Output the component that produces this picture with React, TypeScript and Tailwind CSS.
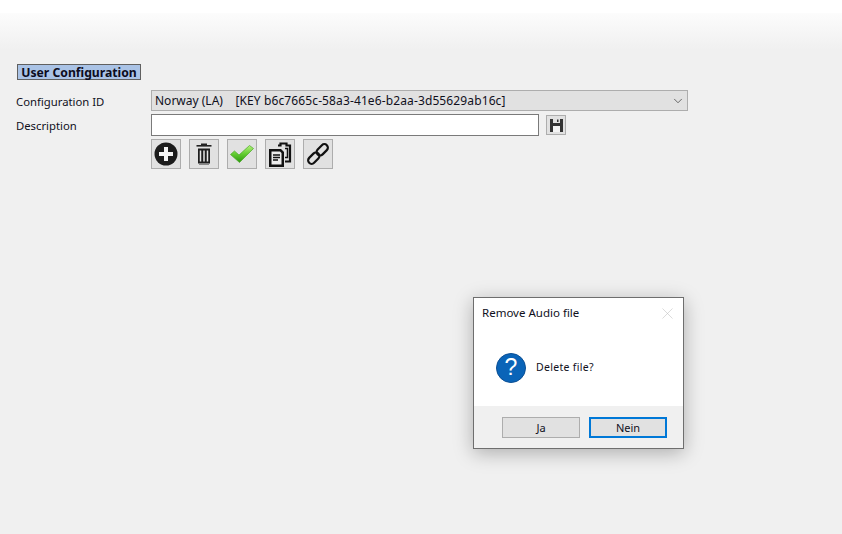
import { ChevronDown, X } from 'lucide-react';
import type { ReactNode } from 'react';

const font = { fontFamily: '"Noto Sans", sans-serif' };

function ToolButton({ children }: { children: ReactNode }) {
  return (
    <button className="w-[30px] h-[30px] border border-[#adadad] bg-[#e1e1e1] flex items-center justify-center">
      {children}
    </button>
  );
}

function PlusIcon() {
  return (
    <svg width="24" height="24" viewBox="0 0 24 24">
      <circle cx="12" cy="12" r="11.500" fill="#1c1c1c" />
      <path d="M12 5v14M5 12h14" stroke="#f4f4f4" strokeWidth="4" />
    </svg>
  );
}

function TrashIcon() {
  return (
    <svg width="16" height="22" viewBox="0 0 16 22">
      <path d="M5 0.500h6v1.500H5z" fill="#222" />
      <rect x="0.500" y="2" width="15" height="1.600" fill="#222" />
      <path d="M2 5.500h12V20.500H2z" fill="#1e1e1e" />
      <path d="M4.500 7.500v11M8 7.500v11M11.500 7.500v11" stroke="#e6e6e6" strokeWidth="1.500" />
      <path d="M3 21h10v1H3z" fill="#8a8a8a" />
    </svg>
  );
}

function CheckIcon() {
  return (
    <svg width="24" height="18" viewBox="0 0 24 18">
      <defs>
        <linearGradient id="chk" x1="0" y1="0" x2="0" y2="1">
          <stop offset="0" stopColor="#b4f27c" />
          <stop offset="0.5" stopColor="#62cc30" />
          <stop offset="1" stopColor="#2c980e" />
        </linearGradient>
      </defs>
      <path d="M0.500 9.500L4.500 6l4.500 4L19.500 0.500 23.500 3.500 9.500 17.500z" fill="url(#chk)" stroke="#4aa828" strokeWidth="0.700" />
    </svg>
  );
}

function PagesIcon() {
  return (
    <svg width="24" height="25" viewBox="0 0 24 25">
      <path d="M10 3.500h2.500V1.500h6v2h3.500V19.500h-5" fill="none" stroke="#111" strokeWidth="2.200" />
      <path d="M17 6.500h2.500v9H17" fill="none" stroke="#111" strokeWidth="1.500" />
      <path d="M1 7h12l3 3v15H1z" fill="#111" />
      <path d="M3.500 9.500h8.500l1.500 1.500v11.500h-10z" fill="#ececec" />
      <path d="M5 13h7M5 15.500h7M5 18h5" stroke="#111" strokeWidth="1.300" />
    </svg>
  );
}

function LinkIcon() {
  return (
    <svg width="26" height="26" viewBox="0 0 26 26" fill="none">
      <g transform="rotate(-45 13 13)" stroke="#111" strokeWidth="2.200">
        <rect x="0.500" y="9.500" width="13" height="7" rx="3.500" />
        <rect x="12.500" y="9.500" width="13" height="7" rx="3.500" />
      </g>
    </svg>
  );
}

function SaveIcon() {
  return (
    <svg width="13" height="13" viewBox="0 0 13 13">
      <path d="M0 0h13v13H0z" fill="#333" />
      <path d="M3 0h7v4H3z" fill="#e1e1e1" />
      <path d="M7 0.500h1.500v2.500H7z" fill="#333" />
      <path d="M3 7h7v6H3z" fill="#f4f4f4" />
    </svg>
  );
}

function QuestionIcon() {
  return (
    <div className="w-[30px] h-[30px] rounded-full bg-[#0a64b8] border border-[#0b4f94] flex items-center justify-center text-white text-[23px] leading-none" style={{ fontFamily: '"Liberation Sans", sans-serif' }}>
      ?
    </div>
  );
}

export default function App() {
  return (
    <div className="relative w-[842px] h-[534px] bg-[#f0f0f0] overflow-hidden text-[12px] text-[#10101c]" style={font}>
      <div className="h-[13px] bg-white" />
      <div className="h-[37px] bg-gradient-to-b from-[#fcfcfc] to-[#f0f0f0]" />

      <div className="pt-[14px] pl-[17px]">
        <div className="w-[124px] h-[16px] pt-[2px] border border-[#606060] bg-[#aac3e6] flex items-center justify-center font-bold text-[12.200px] leading-none text-[#0c0c20]">
          User Configuration
        </div>
      </div>

      <div className="mt-[10px] pl-[16px] flex flex-col">
        <div className="flex items-center h-[21px]">
          <div className="w-[135px] pt-[4px] text-[11.300px]">Configuration ID</div>
          <div className="w-[537px] h-[21px] border border-[#adadad] bg-[#e1e1e1] flex items-center justify-between pl-[3px] pr-[2px]">
            <span className="whitespace-pre">
              Norway (LA)    <span className="tracking-[0.12px]">[KEY b6c7665c-58a3-41e6-b2aa-3d55629ab16c]</span>
            </span>
            <ChevronDown size={14} strokeWidth={1.2} className="text-[#333]" />
          </div>
        </div>

        <div className="flex items-center h-[22px] mt-[3px]">
          <div className="w-[135px] pt-[3px] text-[11.300px]">Description</div>
          <div className="w-[388px] h-[22px] border border-[#7a7a7a] bg-white" />
          <button className="ml-[7px] w-[20px] h-[20px] border border-[#adadad] bg-[#e1e1e1] flex items-center justify-center">
            <SaveIcon />
          </button>
        </div>

        <div className="flex gap-[8px] mt-[3px] ml-[135px]">
          <ToolButton><PlusIcon /></ToolButton>
          <ToolButton><TrashIcon /></ToolButton>
          <ToolButton><CheckIcon /></ToolButton>
          <ToolButton><PagesIcon /></ToolButton>
          <ToolButton><LinkIcon /></ToolButton>
        </div>
      </div>

      <div className="absolute left-[473px] top-[297px] w-[211px] h-[152px] bg-white border border-[#6e6e6e] shadow-[0_4px_18px_rgba(0,0,0,0.28)] flex flex-col">
        <div className="h-[29px] flex items-center justify-between pl-[8px] pr-[6px] pt-[1px]">
          <span className="text-[11.500px]">Remove Audio file</span>
          <X size={19} strokeWidth={0.7} className="text-[#bdbdbd]" />
        </div>
        <div className="flex-1 flex items-center pl-[22px] pt-[2px] gap-[10px] text-[10.500px]">
          <QuestionIcon />
          <span className="tracking-[0.3px]">Delete file?</span>
        </div>
        <div className="h-[42px] bg-[#f0f0f0] flex justify-end gap-[9px] pt-[11px] pr-[16px] text-[11px]">
          <button className="w-[78px] h-[21px] border border-[#adadad] bg-[#e1e1e1] leading-none">Ja</button>
          <button className="w-[78px] h-[21px] border-2 border-[#0078d7] bg-[#e1e1e1] leading-none">Nein</button>
        </div>
      </div>
    </div>
  );
}
